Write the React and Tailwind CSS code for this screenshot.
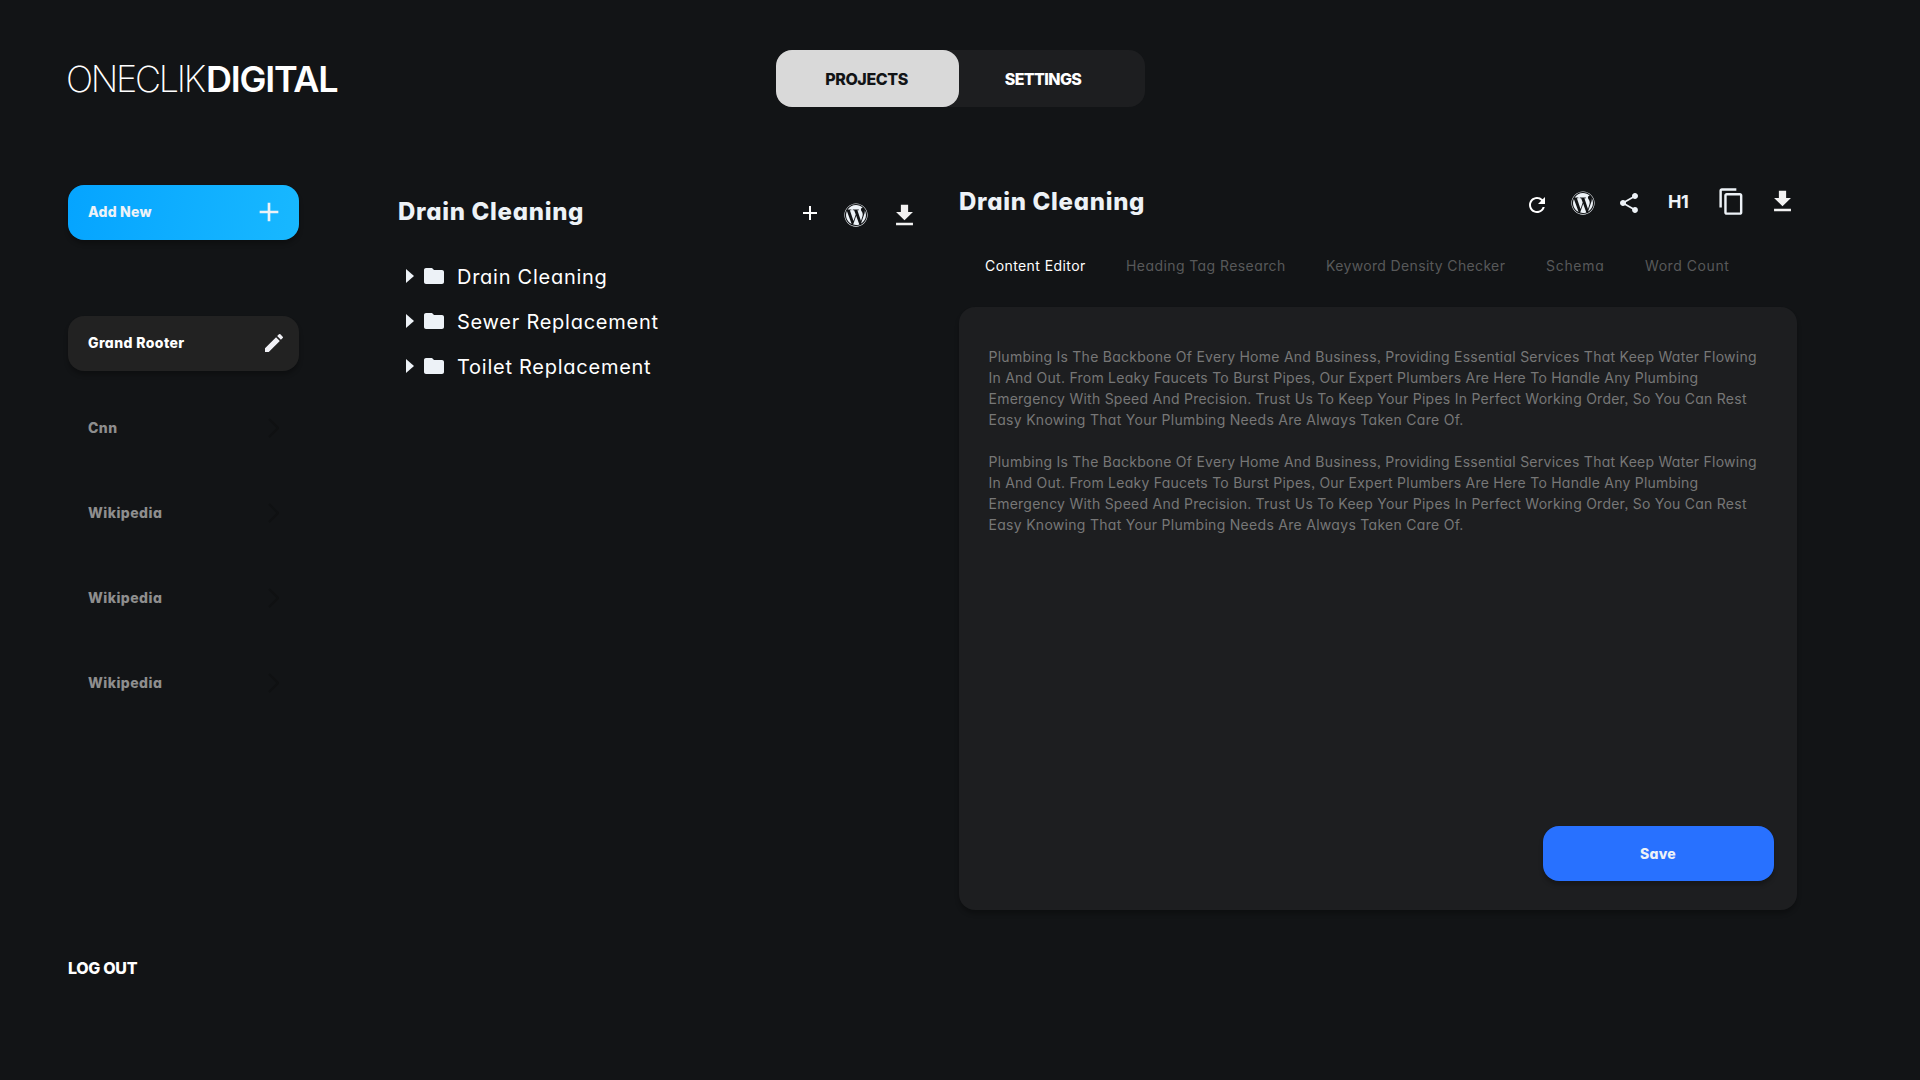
import {
  MdAdd,
  MdContentCopy,
  MdEdit,
  MdFileDownload,
  MdFolder,
  MdRefresh,
  MdShare,
} from "react-icons/md";
import { FaWordpress } from "react-icons/fa";

const sites = [
  { name: "Cnn", tracking: "tracking-[0.45px]" },
  { name: "Wikipedia", tracking: "tracking-[0.45px]" },
  { name: "Wikipedia", tracking: "tracking-[0.45px]" },
  { name: "Wikipedia", tracking: "tracking-[0.45px]" },
];

const folders = ["Drain Cleaning", "Sewer Replacement", "Toilet Replacement"];

const tabs = [
  { label: "Content Editor", width: "w-[141px]", tracking: "tracking-[0.42px]" },
  { label: "Heading Tag Research", width: "w-[200px]", tracking: "tracking-[0.42px]" },
  { label: "Keyword Density Checker", width: "w-[220px]", tracking: "tracking-[0.35px]" },
  { label: "Schema", width: "w-[99px]", tracking: "tracking-[0.7px]" },
  { label: "Word Count", width: "w-[100px]", tracking: "tracking-[0.56px]" },
];

const paragraph = [
  { text: "Plumbing Is The Backbone Of Every Home And Business, Providing Essential Services That Keep Water Flowing", tracking: "tracking-[0.258px]" },
  { text: "In And Out. From Leaky Faucets To Burst Pipes, Our Expert Plumbers Are Here To Handle Any Plumbing", tracking: "tracking-[0.245px]" },
  { text: "Emergency With Speed And Precision. Trust Us To Keep Your Pipes In Perfect Working Order, So You Can Rest", tracking: "tracking-[0.248px]" },
  { text: "Easy Knowing That Your Plumbing Needs Are Always Taken Care Of.", tracking: "tracking-[0.29px]" },
];

function Header() {
  return (
    <header className="flex h-[107px] items-end pl-[66px]">
      <div className="flex h-[57px] w-[710px] items-center text-[36px] leading-none whitespace-nowrap">
        <span className="w-[140px] font-[150] tracking-[-2.3px]">ONECLIK</span>
        <span className="font-semibold tracking-[-1.25px]">DIGITAL</span>
      </div>
      <nav className="flex h-[57px] w-[369px] rounded-2xl bg-[#1d1e20] text-base font-extrabold">
        <button className="flex w-[183px] items-center justify-center rounded-2xl bg-[#d9d9d9] pr-[2px] tracking-[-0.4px] text-[#121416]">
          PROJECTS
        </button>
        <button className="flex w-[168px] items-center justify-center tracking-[-0.6px] text-white">
          SETTINGS
        </button>
      </nav>
    </header>
  );
}

function Sidebar() {
  return (
    <aside className="flex w-[231px] flex-col text-sm font-extrabold">
      <button className="flex h-[55px] items-center justify-between rounded-2xl bg-linear-100 from-[#05a4ff] to-[#18b8ff] pr-[14px] pb-px pl-5 tracking-[0.2px] text-[#edf2f7] shadow-[0_4px_4px_rgba(0,0,0,0.25)]">
        Add New
        <MdAdd className="size-8" />
      </button>
      <button className="mt-[76px] flex h-[55px] items-center justify-between rounded-2xl bg-[#222222] pr-[13px] pb-[2px] pl-5 tracking-[0.4px] text-white shadow-[0_4px_4px_rgba(0,0,0,0.25)]">
        Grand Rooter
        <MdEdit className="size-6 text-[#f1f1f6]" />
      </button>
      {sites.map((site, i) => (
        <button key={i} className="mt-[30px] flex h-[55px] items-center justify-between pr-5 pb-[2px] pl-5 text-[#8e8e8e]">
          <span className={site.tracking}>{site.name}</span>
          <svg className="h-5 w-[11px]" viewBox="0 0 11 20" fill="none" stroke="#0f1112" strokeWidth="2">
            <path d="M1 1l9 9-9 9" />
          </svg>
        </button>
      ))}
      <button className="mt-[245px] flex h-6 items-center text-base tracking-[-0.3px] text-white">LOG OUT</button>
    </aside>
  );
}

function FolderTree() {
  return (
    <section className="ml-[99px] w-[561px] text-[#edf2f7]">
      <div className="flex h-[54px] items-center">
        <h2 className="w-[400px] text-2xl font-extrabold tracking-[0.7px]">Drain Cleaning</h2>
        <MdAdd className="mt-[2px] size-6 text-white" />
        <FaWordpress className="mt-[6px] ml-[22px] size-6" />
        <MdFileDownload className="mt-[6px] ml-[22px] size-[29px] text-[#f2f2f2]" />
      </div>
      <ul className="mt-[15px] pl-2">
        {folders.map((name) => (
          <li key={name} className="flex h-[45px] items-center">
            <svg className="mb-[2px] h-[14px] w-2" viewBox="0 0 8 14" fill="currentColor">
              <path d="M0 0l8 7-8 7z" />
            </svg>
            <MdFolder className="mb-px ml-2 size-6" />
            <span className="ml-[11px] text-xl tracking-[0.74px] text-white">{name}</span>
          </li>
        ))}
      </ul>
    </section>
  );
}

function Editor() {
  return (
    <section className="w-[838px]">
      <div className="flex h-[33px] items-center text-[#edf2f7]">
        <h2 className="w-[566px] text-2xl font-extrabold tracking-[0.7px]">Drain Cleaning</h2>
        <MdRefresh className="mt-[7px] size-6 text-white" />
        <FaWordpress className="mt-[3px] ml-[22px] size-6" />
        <MdShare className="mt-[3px] ml-[22px] size-6" />
        <span className="ml-[27px] w-[22px] text-lg font-bold tracking-[-0.5px]">H1</span>
        <MdContentCopy className="ml-[27px] size-[29px]" />
        <MdFileDownload className="ml-[22px] size-[29px] text-[#f2f2f2]" />
      </div>
      <div className="mt-9 flex h-6 items-center pl-[26px] text-sm text-[#58595a]">
        {tabs.map((tab, i) => (
          <button key={tab.label} className={`${tab.width} ${tab.tracking} text-left whitespace-nowrap ${i === 0 ? "text-white" : ""}`}>
            {tab.label}
          </button>
        ))}
      </div>
      <div className="mt-[29px] flex h-[603px] flex-col justify-between rounded-2xl bg-[#1d1e20] pt-[39px] pr-[23px] pb-[29px] pl-[29.5px] shadow-[0_4px_4px_rgba(0,0,0,0.25)]">
        <div className="flex flex-col gap-[21px] text-sm leading-[21px] whitespace-nowrap text-[#777777]">
          {[0, 1].map((n) => (
            <p key={n}>
              {paragraph.map((line) => (
                <span key={line.text} className={`block ${line.tracking}`}>{line.text}</span>
              ))}
            </p>
          ))}
        </div>
        <button className="flex h-[55px] w-[231px] items-center justify-center self-end rounded-2xl bg-[#2871ff] pr-px text-sm font-extrabold tracking-[0.3px] text-[#edf2f7] shadow-[0_4px_4px_rgba(0,0,0,0.25)]">
          Save
        </button>
      </div>
    </section>
  );
}

export default function App() {
  return (
    <div className="h-[1080px] w-[1920px] overflow-hidden bg-[#121416] font-['Inter',sans-serif] text-white [font-feature-settings:'cv11','ss03']">
      <Header />
      <main className="mt-[78px] flex pl-[68px]">
        <Sidebar />
        <FolderTree />
        <Editor />
      </main>
    </div>
  );
}
